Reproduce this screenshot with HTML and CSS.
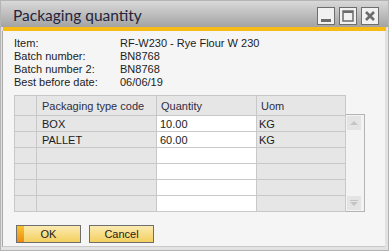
FILE: index.html
```html
<!DOCTYPE html>
<html lang="en">
<head>
  <meta charset="UTF-8" />
  <title>Packaging quantity</title>
  <link rel="stylesheet" href="styles.css">
</head>
<body>
  <div class="window">
    <div class="titlebar">
      <span class="title">Packaging quantity</span>
      <div class="title-buttons">
        <span class="tbtn">
          <svg width="16" height="16" viewBox="0 0 16 16"><rect x="3" y="11" width="10" height="3" fill="#6b6b6b"/></svg>
        </span>
        <span class="tbtn">
          <svg width="16" height="16" viewBox="0 0 16 16"><rect x="3" y="3" width="10" height="10" fill="none" stroke="#6b6b6b" stroke-width="1.5"/><rect x="3" y="3" width="10" height="2" fill="#6b6b6b"/></svg>
        </span>
        <span class="tbtn">
          <svg width="16" height="16" viewBox="0 0 16 16"><path d="M4 4 L12 12 M12 4 L4 12" stroke="#6b6b6b" stroke-width="2.6"/></svg>
        </span>
      </div>
    </div>
    <div class="accent"></div>
    <div class="content">
      <div class="info">
        <span>Item:</span><span>RF-W230 - Rye Flour W 230</span>
        <span>Batch number:</span><span>BN8768</span>
        <span>Batch number 2:</span><span>BN8768</span>
        <span>Best before date:</span><span>06/06/19</span>
      </div>

      <div class="grid-wrap">
        <table class="grid">
          <colgroup>
            <col class="w-row">
            <col class="w-code">
            <col class="w-qty">
            <col class="w-uom">
          </colgroup>
          <thead>
            <tr>
              <th class="rowhead"></th>
              <th>Packaging type code</th>
              <th class="tight">Quantity</th>
              <th class="tight">Uom</th>
            </tr>
          </thead>
          <tbody>
            <tr><td class="rowhead"></td><td class="ro">BOX</td><td class="edit">10.00</td><td class="ro tight">KG</td></tr>
            <tr><td class="rowhead"></td><td class="ro">PALLET</td><td class="edit">60.00</td><td class="ro tight">KG</td></tr>
            <tr><td class="rowhead"></td><td class="ro"></td><td class="edit"></td><td class="ro"></td></tr>
            <tr><td class="rowhead"></td><td class="ro"></td><td class="edit"></td><td class="ro"></td></tr>
            <tr><td class="rowhead"></td><td class="ro"></td><td class="edit"></td><td class="ro"></td></tr>
            <tr><td class="rowhead"></td><td class="ro"></td><td class="edit"></td><td class="ro"></td></tr>
          </tbody>
        </table>
        <div class="scrollbar">
          <span class="sarrow">
            <svg width="14" height="14" viewBox="0 0 14 14"><path d="M3 9 L7 5 L11 9 Z" fill="#c4c4c4"/></svg>
          </span>
          <span class="sarrow">
            <svg width="14" height="14" viewBox="0 0 14 14"><rect x="3" y="4" width="8" height="1" fill="#c4c4c4"/><path d="M3 6 L11 6 L7 10 Z" fill="#c4c4c4"/></svg>
          </span>
        </div>
      </div>

      <div class="actions">
        <button class="btn primary"><span class="stripe"></span><span class="label">OK</span></button>
        <button class="btn"><span class="label">Cancel</span></button>
      </div>
    </div>
  </div>
</body>
</html>
```

FILE: styles.css
```css
body {
  margin: 0;
  background: #e6e6e6;
  font-family: "Liberation Sans", Arial, sans-serif;
  font-size: 11px;
  color: #1c1c1c;
}
.window {
  width: 389px;
  height: 251px;
  box-sizing: border-box;
  border: 1px solid #b4b4b4;
  background: #e2e2e2;
  display: flex;
  flex-direction: column;
}
.titlebar {
  height: 26px;
  background: linear-gradient(#d9d9d9, #a3a3a3);
  display: flex;
  align-items: center;
  justify-content: space-between;
  padding: 0 9px 0 12px;
}
.title {
  font-family: Lato, sans-serif;
  font-size: 15.5px;
  color: #24243c;
  padding-top: 2px;
}
.title-buttons {
  display: flex;
  gap: 4px;
  padding-top: 4px;
}
.tbtn {
  width: 16px;
  height: 16px;
  border: 1px solid #6e6e6e;
  background: #f1f1f1;
  display: flex;
}
.accent {
  height: 4px;
  background: #f7bb15;
  margin: 0 2px;
}
.content {
  flex: 1;
  margin: 0 3px 3px 1px;
  border-left: 1px solid #a9a9a9;
  border-bottom: 1px solid #c9c9c9;
  background: #f5f5f5;
  padding: 6px 0 0 11px;
}
.info {
  display: grid;
  grid-template-columns: 106px auto;
  line-height: 13px;
}
.grid-wrap {
  display: flex;
  align-items: flex-end;
  margin-top: 6px;
}
.grid {
  border-collapse: collapse;
  table-layout: fixed;
  width: 331px;
}
.w-row { width: 22px; }
.w-code { width: 120px; }
.w-qty { width: 100px; }
.w-uom { width: 89px; }
.grid th, .grid td {
  border: 1px solid #c8c8c8;
  padding: 0 0 0 5px;
  text-align: left;
  font-weight: normal;
  white-space: nowrap;
  overflow: hidden;
}
.grid th {
  height: 19px;
  background: #e6e6e6;
  color: #2e2e44;
}
.grid td {
  height: 15px;
}
.grid .rowhead {
  background: #e6e6e6;
  padding: 0;
}
.grid td.ro {
  background: #e6e6e6;
}
.grid td.edit {
  background: #fff;
  padding-left: 3px;
}
.grid .tight {
  padding-left: 4px;
}
.grid td.tight {
  padding-left: 2px;
}
.scrollbar {
  width: 16px;
  height: 94px;
  border: 1px solid #b4b4b4;
  border-left: none;
  background: #f3f3f3;
  display: flex;
  flex-direction: column;
  justify-content: space-between;
  padding: 1px;
}
.sarrow {
  width: 14px;
  height: 14px;
  background: #e4e4e4;
  display: flex;
}
.actions {
  display: flex;
  gap: 8px;
  margin-top: 13px;
  padding-left: 2px;
}
.btn {
  width: 65px;
  height: 18px;
  border: 1px solid #6f6f6f;
  background: linear-gradient(#fbebb2, #f4cf5e);
  font-family: "Liberation Sans", Arial, sans-serif;
  font-size: 11px;
  color: #1c1c1c;
  padding: 0;
  display: flex;
  align-items: stretch;
}
.stripe {
  width: 7px;
  background: linear-gradient(#f8c42a, #ee8b14);
}
.label {
  flex: 1;
  display: flex;
  align-items: center;
  justify-content: center;
}
.primary .label {
  margin-right: 7px;
}
```
